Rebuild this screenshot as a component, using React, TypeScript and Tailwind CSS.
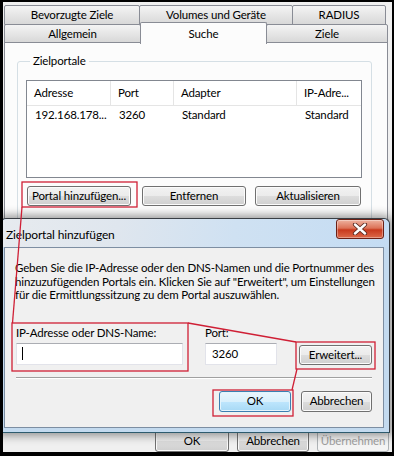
import React from "react"

// Vista-style push buttons
const btn =
  "flex items-center justify-center rounded-[3px] border border-[#707070] bg-[linear-gradient(to_bottom,#f2f2f2_0%,#ebebeb_50%,#dddddd_51%,#cfcfcf_100%)] shadow-[inset_0_0_0_1px_#fbfbfb] leading-none text-black"
const btnDefault =
  "flex items-center justify-center rounded-[3px] border border-[#3c7fb1] bg-[linear-gradient(to_bottom,#eaf6fd_0%,#d9f0fc_50%,#bee6fd_51%,#a7d9f5_100%)] shadow-[inset_0_0_0_1px_#e4f4fc] leading-none text-black"
const btnDisabled =
  "flex items-center justify-center rounded-[3px] border border-[#adb2b5] bg-[#f4f4f4] leading-none text-[#a0a0a0]"
const tab =
  "flex items-center justify-center border border-[#898c95] rounded-t-[2px] bg-[linear-gradient(to_bottom,#f4f4f4,#d8d8d8)] text-black -ml-px first:ml-0"

function CloseButton() {
  return (
    <div className="flex h-[20px] w-[48px] items-center justify-center rounded-[3px] border border-[#6b2015] bg-[linear-gradient(to_bottom,#eeb2a0_0%,#dc7258_45%,#c8391d_55%,#dc6a4a_100%)] shadow-[inset_0_0_0_1px_rgba(255,255,255,0.35)]">
      <svg width="16" height="12" viewBox="0 0 16 12">
        <path d="M3 1.5 L13 10.5 M13 1.5 L3 10.5" stroke="#5a2a22" strokeWidth="4.2" strokeLinecap="round" />
        <path d="M3 1.5 L13 10.5 M13 1.5 L3 10.5" stroke="#ffffff" strokeWidth="2.4" strokeLinecap="round" />
      </svg>
    </div>
  )
}

function ListView() {
  const cols = [
    { w: "w-[84px]", head: "Adresse", cell: "192.168.178..." },
    { w: "w-[63px]", head: "Port", cell: "3260" },
    { w: "w-[123px]", head: "Adapter", cell: "Standard" },
    { w: "flex-1", head: "IP-Adre...", cell: "Standard" },
  ]
  return (
    <div className="flex h-[98px] w-[336px] flex-col border border-[#828790] bg-white">
      <div className="flex h-[25px] border-b border-[#e5e5e5]">
        {cols.map((c) => (
          <div key={c.head} className={`${c.w} flex items-center border-r border-[#e5e5e5] pl-[7px] last:border-r-0`}>
            {c.head}
          </div>
        ))}
      </div>
      <div className="flex h-[18px]">
        {cols.map((c) => (
          <div key={c.head} className={`${c.w} flex items-center pl-[8px]`}>
            {c.cell}
          </div>
        ))}
      </div>
    </div>
  )
}

function Dialog() {
  const lines = [
    "Geben Sie die IP-Adresse oder den DNS-Namen und die Portnummer des",
    'hinzuzufügenden Portals ein. Klicken Sie auf "Erweitert", um Einstellungen',
    "für die Ermittlungssitzung zu dem Portal auszuwählen.",
  ]
  return (
    <div className="absolute left-[-3px] top-[216px] flex h-[215px] w-[390px] flex-col rounded-t-[6px] border border-[#3a3f45] border-b-[#2d5b6e] bg-[#c3daef] shadow-[0_0_9px_3px_rgba(40,40,40,0.45)]">
      {/* title bar */}
      <div className="flex h-[28px] items-start justify-between rounded-t-[6px] bg-[linear-gradient(100deg,#e7ebef_0%,#dfe6ee_30%,#cfe1f2_60%,#c4dcf3_100%)] pl-[5px] pr-[5px]">
        <span className="pt-[9px] text-[12px] leading-[14px] text-black">Zielportal hinzufügen</span>
        <CloseButton />
      </div>

      {/* client area */}
      <div className="ml-[3px] flex h-[181px] w-[380px] flex-col border border-[#7d8ea2] bg-[#f0f0f0] px-[11px]">
        <div className="-ml-px flex flex-col whitespace-nowrap pt-[13px] leading-[13.5px] text-black">
          {lines.map((l) => (
            <span key={l}>{l}</span>
          ))}
        </div>

        <div className="mt-[24px] flex items-end">
          <div className="flex w-[167px] flex-col gap-[3px]">
            <span className="leading-[14px]">IP-Adresse oder DNS-Name:</span>
            <div className="flex h-[22px] items-center border border-[#e2e3ea] border-t-[#abadb3] bg-white pl-[5px]">
              <div className="h-[13px] w-px bg-black" />
            </div>
          </div>
          <div className="ml-[22px] flex w-[72px] flex-col gap-[3px]">
            <span className="leading-[14px]">Port:</span>
            <div className="flex h-[22px] items-center border border-[#e2e3ea] border-t-[#abadb3] bg-white pl-[6px]">
              3260
            </div>
          </div>
          <div className={`${btn} ml-[22px] h-[20px] w-[73px]`}>Erweitert...</div>
        </div>

        <div className="mt-[12px] h-[2px] border-t border-[#a0a0a0] border-b border-b-white" />

        <div className="mt-[12px] flex justify-end gap-[10px]">
          <div className={`${btnDefault} h-[21px] w-[72px]`}>OK</div>
          <div className={`${btn} h-[21px] w-[71px]`}>Abbrechen</div>
        </div>
      </div>
    </div>
  )
}

function Annotations() {
  const red = "#cf1f35"
  return (
    <svg className="pointer-events-none absolute left-[-3px] top-[-2px]" width="394" height="456" viewBox="0 0 394 456">
      <g fill="none" stroke={red} strokeWidth="1.3">
        <rect x="22" y="182" width="115" height="25" />
        <rect x="12" y="323" width="176" height="48" />
        <rect x="296" y="342" width="79" height="27" />
        <rect x="213" y="390" width="80" height="26" />
        <line x1="22" y1="207" x2="12.5" y2="323" />
        <line x1="188" y1="323" x2="296" y2="342" />
        <line x1="297" y1="369" x2="292" y2="390" />
      </g>
    </svg>
  )
}

export default function App() {
  return (
    <div className="relative h-[456px] w-[394px] overflow-hidden border-b-[4px] border-l-[3px] border-r-[2px] border-t-[2px] border-black bg-[#f0f0f0] text-[11.5px] tracking-[-0.15px] text-black [font-family:Lato,'Noto_Sans',sans-serif]">
      <div className="flex h-full flex-col">
        {/* tab strip */}
        <div className="ml-px pt-[3px]">
          <div className="flex h-[20px]">
            <div className={`${tab} w-[136px]`}>Bevorzugte Ziele</div>
            <div className={`${tab} w-[154px]`}>Volumes und Geräte</div>
            <div className={`${tab} w-[94px]`}>RADIUS</div>
          </div>
          <div className="-mt-px flex h-[19px]">
            <div className={`${tab} w-[137px]`}>Allgemein</div>
            <div className="relative z-10 -ml-px -mt-[2px] flex h-[22px] w-[127px] items-start justify-center rounded-t-[2px] border border-b-0 border-[#898c95] bg-[#fcfcfc] pt-[2px]">
              Suche
            </div>
            <div className={`${tab} w-[122px]`}>Ziele</div>
          </div>
        </div>

        {/* tab page */}
        <div className="-mt-px ml-px min-h-0 w-[384px] flex-1 border border-[#898c95] bg-[#fcfcfc] pl-[12px]">
          <fieldset className="mt-[11px] w-[355px] rounded-[3px] border border-[#d5dfe5] pb-[40px] pl-[8px]">
            <legend className="ml-[4px] px-[3px] leading-[14px]">Zielportale</legend>
            <div className="mt-[12px]">
              <ListView />
            </div>
            <div className="ml-px mt-[8px] flex">
              <div className={`${btn} h-[20px] w-[104px]`}>Portal hinzufügen...</div>
              <div className={`${btn} ml-[11px] h-[20px] w-[104px]`}>Entfernen</div>
              <div className={`${btn} ml-[9px] h-[20px] w-[106px]`}>Aktualisieren</div>
            </div>
          </fieldset>
        </div>

        {/* dialog buttons of the property sheet */}
        <div className="flex h-[28px] shrink-0 items-end justify-end gap-[8px] pr-[3px]">
          <div className={`${btn} h-[22px] w-[74px]`}>OK</div>
          <div className={`${btn} h-[22px] w-[72px]`}>Abbrechen</div>
          <div className={`${btnDisabled} h-[22px] w-[72px]`}>Übernehmen</div>
        </div>
      </div>

      <Dialog />
      <Annotations />
    </div>
  )
}
